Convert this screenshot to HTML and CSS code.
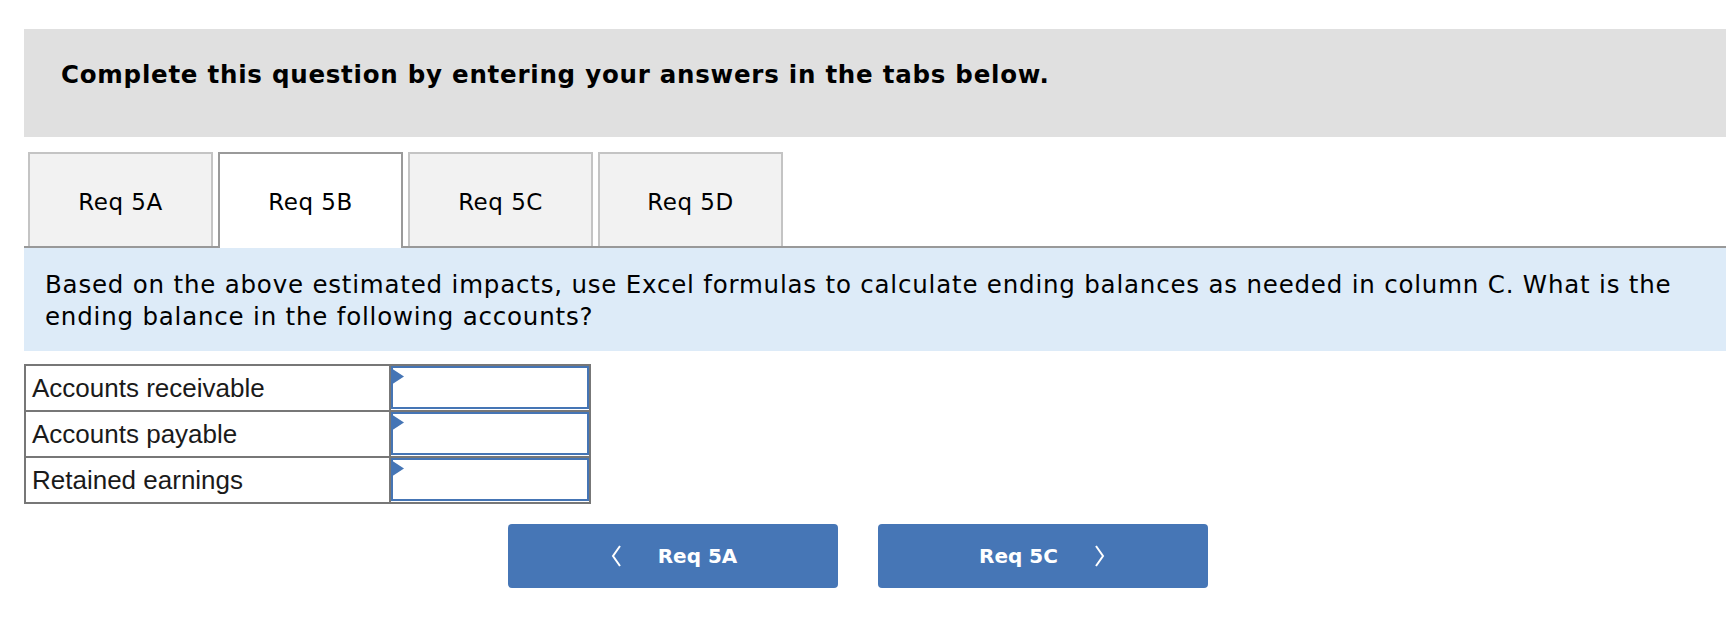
FILE: index.html
```html
<!DOCTYPE html>
<html lang="en">
<head>
<meta charset="utf-8">
<title>Req 5B</title>
<link rel="stylesheet" href="styles.css">
</head>
<body>
<div class="page">
  <div class="banner">
    <h2 class="banner-title">Complete this question by entering your answers in the tabs below.</h2>
  </div>

  <div class="tabs">
    <div class="tab">Req 5A</div>
    <div class="tab active">Req 5B</div>
    <div class="tab">Req 5C</div>
    <div class="tab">Req 5D</div>
  </div>

  <div class="prompt">
    <p>Based on the above estimated impacts, use Excel formulas to calculate ending balances as needed in column C. What is the ending balance in the following accounts?</p>
  </div>

  <table class="answers">
    <tr>
      <td class="label">Accounts receivable</td>
      <td class="cell"><div class="input"><svg class="flag" width="13" height="17" viewBox="0 0 13 17"><polygon points="0,0 13,8.5 0,17" fill="#4575b5"/></svg></div></td>
    </tr>
    <tr>
      <td class="label">Accounts payable</td>
      <td class="cell"><div class="input"><svg class="flag" width="13" height="17" viewBox="0 0 13 17"><polygon points="0,0 13,8.5 0,17" fill="#4575b5"/></svg></div></td>
    </tr>
    <tr>
      <td class="label">Retained earnings</td>
      <td class="cell"><div class="input"><svg class="flag" width="13" height="17" viewBox="0 0 13 17"><polygon points="0,0 13,8.5 0,17" fill="#4575b5"/></svg></div></td>
    </tr>
  </table>

  <div class="nav">
    <button class="nav-btn">
      <svg class="chev" width="14" height="24" viewBox="0 0 14 24"><polyline points="11,2 4,12 11,22" fill="none" stroke="#fff" stroke-width="2"/></svg>
      <span class="nav-text">Req 5A</span>
    </button>
    <button class="nav-btn">
      <span class="nav-text">Req 5C</span>
      <svg class="chev" width="14" height="24" viewBox="0 0 14 24"><polyline points="3,2 10,12 3,22" fill="none" stroke="#fff" stroke-width="2"/></svg>
    </button>
  </div>
</div>
</body>
</html>
```

FILE: styles.css
```css
* { box-sizing: border-box; }
html, body { margin: 0; padding: 0; background: #fff; }
body { font-family: "DejaVu Sans", Verdana, sans-serif; color: #000; }

.page {
  padding: 29px 10px 0 24px;
}

.banner {
  background: #e0e0e0;
  height: 108px;
  padding: 32px 0 0 37px;
}
.banner-title {
  margin: 0;
  font-size: 24.5px;
  letter-spacing: 0.75px;
  line-height: 28px;
  font-weight: bold;
}

.tabs {
  display: flex;
  margin: 15px 0 0 4px;
  gap: 5px;
  align-items: flex-end;
}
.tab {
  width: 185px;
  height: 94px;
  background: #f2f2f2;
  border: 2px solid #c4c4c4;
  border-bottom: none;
  display: flex;
  align-items: center;
  justify-content: center;
  font-size: 23px;
  letter-spacing: 0.5px;
  padding-top: 3px;
}
.tab.active {
  background: #fff;
  border-color: #9a9a9a;
  height: 96px;
  margin-bottom: -2px;
  position: relative;
  z-index: 1;
  padding-top: 1px;
}

.prompt {
  background: #ddebf8;
  border-top: 2px solid #999;
  padding: 21px 20px 18px 21px;
}
.prompt p {
  margin: 0;
  font-size: 24.5px;
  letter-spacing: 0.8px;
  line-height: 32px;
}

.answers {
  margin-top: 13px;
  border-collapse: collapse;
  font-family: "Liberation Sans", Arial, sans-serif;
}
.answers td {
  border: 2px solid #777;
  padding: 0;
  height: 46px;
}
.answers .label {
  width: 365px;
  font-size: 26px;
  padding-left: 6px;
  padding-top: 1px;
  color: #1a1a1a;
  vertical-align: middle;
}
.answers .cell {
  width: 200px;
  vertical-align: top;
}
.input {
  position: relative;
  height: 43px;
  border: 2px solid #4575b5;
  background: #fff;
}
.flag {
  position: absolute;
  left: -2px;
  top: 0;
  display: block;
}

.nav {
  display: flex;
  gap: 40px;
  margin: 20px 0 0 484px;
}
.nav-btn {
  width: 330px;
  height: 64px;
  background: #4676b6;
  border: none;
  border-radius: 4px;
  color: #fff;
  display: flex;
  align-items: center;
  justify-content: center;
  gap: 35px;
  font-family: "DejaVu Sans", Verdana, sans-serif;
  font-weight: bold;
  font-size: 20px;
  padding: 0;
}
.chev { display: block; }
```
